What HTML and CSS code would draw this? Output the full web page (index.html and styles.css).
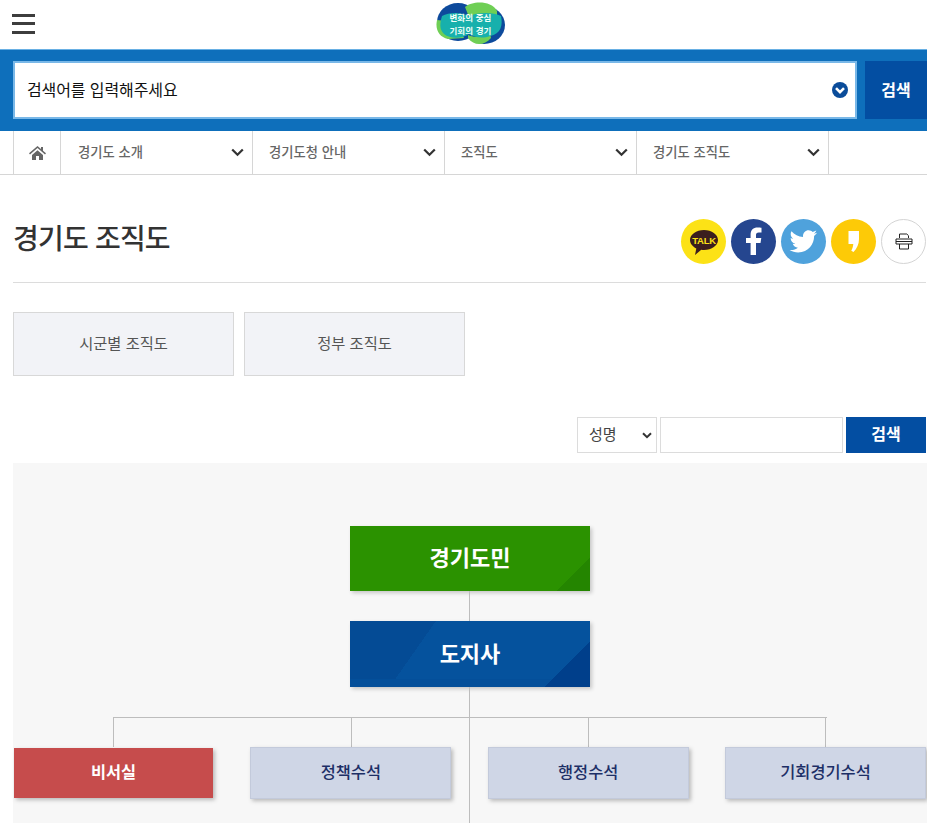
FILE: index.html
```html
<!DOCTYPE html>
<html lang="ko">
<head>
<meta charset="utf-8">
<title>경기도 조직도</title>
<link rel="stylesheet" href="styles.css">
</head>
<body>
<header class="top">
  <button class="burger" aria-label="메뉴"><span></span><span></span><span></span></button>
  <div class="logo">
    <svg width="70" height="44" viewBox="0 0 70 44">
      <ellipse cx="22" cy="20" rx="21" ry="19" fill="#0d4a9c"/>
      <ellipse cx="48" cy="23" rx="21" ry="19" fill="#0d4a9c"/>
      <path d="M29 5C36-1 55-2 61 9L61 14 33 15Z" fill="#6fcf55"/>
      <path d="M1 18C-1 28 3 35 12 37L28 36 20 20Z" fill="#6fcf55"/>
      <path d="M32 33C38 36 48 35 54 31L55 36C48 44 38 44 32 36Z" fill="#6fcf55"/>
      <path d="M6 14C13 10 25 10 33 14 42 10 58 10 65 14 67 23 65 32 54 34 46 37 38 35 33 32 26 37 14 37 8 32 3 27 4 21 6 14Z" fill="#17b0ac"/>
    </svg>
    <div class="logo-text">변화의 중심<br>기회의 경기</div>
  </div>
</header>

<section class="search-band">
  <div class="search-input">
    <span>검색어를 입력해주세요</span>
    <svg class="search-chev" width="16" height="16" viewBox="0 0 16 16"><circle cx="8" cy="8" r="8" fill="#0a4c9a"/><path d="M4 6.200 8 10.200 12 6.200" fill="none" stroke="#fff" stroke-width="2.600"/></svg>
  </div>
  <button class="search-btn">검색</button>
</section>

<nav class="crumbs">
  <a class="home" aria-label="홈">
    <svg width="17" height="14" viewBox="0 0 17 14"><path d="M8.500 0 0 7.200l1 1.200 7.500-6.300L16 8.400l1-1.200-3-2.500V1h-2v2L8.500 0Z" fill="#666"/><path d="M3 9 8.500 4.300 14 9v5H10V10H7v4H3Z" fill="#666"/></svg>
  </a>
  <a class="crumb"><span>경기도 소개</span><svg class="chev" width="13" height="9" viewBox="0 0 13 9"><path d="M1.200 1.400 6.500 6.800l5.300-5.400" fill="none" stroke="#333" stroke-width="2.200"/></svg></a>
  <a class="crumb"><span>경기도청 안내</span><svg class="chev" width="13" height="9" viewBox="0 0 13 9"><path d="M1.200 1.400 6.500 6.800l5.300-5.400" fill="none" stroke="#333" stroke-width="2.200"/></svg></a>
  <a class="crumb"><span>조직도</span><svg class="chev" width="13" height="9" viewBox="0 0 13 9"><path d="M1.200 1.400 6.500 6.800l5.300-5.400" fill="none" stroke="#333" stroke-width="2.200"/></svg></a>
  <a class="crumb"><span>경기도 조직도</span><svg class="chev" width="13" height="9" viewBox="0 0 13 9"><path d="M1.200 1.400 6.500 6.800l5.300-5.400" fill="none" stroke="#333" stroke-width="2.200"/></svg></a>
</nav>

<main class="content">
  <div class="title-row">
    <h1>경기도 조직도</h1>
    <div class="shares">
      <span class="share kakao"><svg width="45" height="45" viewBox="0 0 45 45"><path d="M23 11C15.300 11 9 15.500 9 21c0 3.500 2.500 6.600 6.300 8.400L14 36l6.300-5.200c.9.100 1.800.2 2.700.2 7.700 0 14-4.500 14-10S30.700 11 23 11Z" fill="#3b1e1e"/><text x="23" y="24.500" text-anchor="middle" class="talk">TALK</text></svg></span>
      <span class="share fb"><svg width="45" height="45" viewBox="0 0 45 45"><path d="M25 36V24h4.500l.8-5H25v-3c0-1.700.7-2.600 2.700-2.600h2.800V8.700C29.800 8.600 28.300 8.500 26.600 8.500c-4.300 0-7 2.600-7 7.100V19H15v5h4.600v12Z" fill="#fff"/></svg></span>
      <span class="share tw"><svg width="45" height="45" viewBox="0 0 45 45"><path d="M36 13.800c-1 .5-2.100.8-3.200.9 1.200-.7 2-1.800 2.500-3.100-1.100.7-2.300 1.100-3.600 1.400-1-1.100-2.500-1.800-4.100-1.800-3.100 0-5.600 2.500-5.600 5.600 0 .4 0 .9.100 1.300-4.700-.2-8.800-2.400-11.600-5.800-.5.800-.8 1.800-.8 2.800 0 2 1 3.700 2.500 4.700-.9 0-1.800-.3-2.500-.7v.1c0 2.700 1.900 5 4.500 5.500-.5.100-1 .2-1.500.2-.4 0-.7 0-1-.1.700 2.200 2.800 3.800 5.200 3.900-1.900 1.500-4.300 2.400-7 2.400-.5 0-.9 0-1.300-.1 2.500 1.600 5.400 2.500 8.600 2.500 10.300 0 15.900-8.500 15.900-15.900v-.7c1.100-.8 2-1.800 2.800-2.900Z" fill="#fff"/></svg></span>
      <span class="share story"><svg width="45" height="45" viewBox="0 0 45 45"><path d="M17.500 12H28v8c0 5-2 9.500-5.500 13l-2.200-1.300c1.200-2.500 1.900-4.500 2-6.700h-4.800Z" fill="#fff"/></svg></span>
      <span class="share print"><svg width="18" height="17" viewBox="0 0 18 17"><path d="M4.500 5V1h7.300L13.500 2.700V5M1 6h16v5H1ZM4.500 11v5h9v-5M1 8.500h16" fill="none" stroke="#222" stroke-width="1"/></svg></span>
    </div>
  </div>

  <div class="tabs">
    <a class="tab">시군별 조직도</a>
    <a class="tab">정부 조직도</a>
  </div>

  <form class="finder">
    <div class="finder-select"><span>성명</span><svg width="10" height="7" viewBox="0 0 10 7"><path d="M1 1.200 5 5.200l4-4" fill="none" stroke="#333" stroke-width="2"/></svg></div>
    <div class="finder-input"></div>
    <button class="finder-btn" type="button">검색</button>
  </form>

  <section class="chart">
    <div class="node node-green">경기도민</div>
    <div class="link"></div>
    <div class="node node-blue">도지사</div>
    <div class="link"></div>
    <div class="branch">
      <div class="branch-item"><div class="drop"></div><div class="sub sub-red">비서실</div></div>
      <div class="branch-item"><div class="drop drop-shift"></div><div class="sub">정책수석</div></div>
      <div class="branch-item"><div class="drop"></div><div class="sub">행정수석</div></div>
      <div class="branch-item"><div class="drop drop-shift"></div><div class="sub">기회경기수석</div></div>
    </div>
  </section>
</main>
</body>
</html>
```
FILE: styles.css
```css
* { box-sizing: border-box; }
html, body { margin: 0; padding: 0; height: 823px; overflow: hidden; background: #fff; }
body { font-family: "Noto Sans CJK KR", "Noto Sans", sans-serif; color: #333; }

.top { height: 49px; display: flex; align-items: center; position: relative; }
.burger { width: 23px; height: 20px; margin: 0 0 2px 12px; padding: 0; border: 0; background: none; display: flex; flex-direction: column; justify-content: space-between; }
.burger span { display: block; height: 3px; background: #3d3d3d; }
.logo { position: absolute; left: 436px; top: 2px; width: 70px; height: 44px; }
.logo-text { position: absolute; inset: 9px 0 0 -1px; text-align: center; font-size: 8.500px; line-height: 12.500px; font-weight: 700; color: #f0fff8; letter-spacing: .1px; }

.search-band { height: 82px; background: #0e6fbb; border-top: 1px solid #69b0e4; display: flex; align-items: flex-start; padding: 11px 0 0 13px; }
.search-input { width: 844px; height: 58px; border: 2px solid #79b8e8; background: #fff; display: flex; align-items: center; justify-content: space-between; padding: 0 7px 0 12px; font-size: 16px; color: #111; letter-spacing: -.1px; }
.search-input span { padding-bottom: 3px; }
.search-btn { width: 62px; height: 58px; margin-left: 8px; border: 0; background: #034ea2; color: #fff; font: 700 16px "Noto Sans CJK KR", sans-serif; padding: 0 0 3px; }

.crumbs { height: 44px; border-bottom: 1px solid #d6d6d6; padding-left: 13px; display: flex; }
.home { width: 48px; border-left: 1px solid #d6d6d6; border-right: 1px solid #d6d6d6; display: flex; align-items: center; justify-content: center; }
.crumb { width: 192px; border-right: 1px solid #d6d6d6; display: flex; align-items: center; justify-content: space-between; padding: 0 8px 0 16px; font-size: 13.300px; font-weight: 500; color: #666; }
.crumb span { padding-bottom: 2px; }
.home + .crumb { padding-left: 17px; }

.content { padding: 0 1px 0 13px; }
.title-row { height: 108px; border-bottom: 1px solid #dcdcdc; display: flex; justify-content: space-between; align-items: flex-start; padding-top: 44px; }
h1 { margin: 0; font-size: 28px; line-height: 36px; font-weight: 500; color: #333; letter-spacing: -.8px; }
.shares { display: flex; gap: 5px; }
.share { width: 45px; height: 45px; border-radius: 50%; display: flex; align-items: center; justify-content: center; }
.kakao { background: #fce216; }
.talk { font: 700 9.500px "Liberation Sans", sans-serif; fill: #fce216; letter-spacing: -.3px; }
.fb { background: #25468f; }
.tw { background: #4fa2dc; }
.story { background: #fdca07; }
.print { background: #fff; border: 1px solid #d4d4d4; }

.tabs { display: flex; gap: 10px; margin-top: 29px; }
.tab { width: 221px; height: 64px; background: #f2f3f7; border: 1px solid #d8d8d8; display: flex; align-items: center; justify-content: center; padding-bottom: 4px; font-size: 15.300px; color: #555; }

.finder { display: flex; justify-content: flex-end; gap: 3px; margin-top: 41px; height: 36px; }
.finder-select { width: 80px; border: 1px solid #dcdcdc; display: flex; align-items: center; justify-content: space-between; padding: 0 4px 0 11px; font-size: 15px; color: #444; }
.finder-select span { padding-bottom: 4px; }
.finder-input { width: 183px; border: 1px solid #dcdcdc; background: #fff; }
.finder-btn { width: 80px; border: 0; background: #034ea2; color: #fff; font: 700 16px "Noto Sans CJK KR", sans-serif; padding: 0 0 5px; }

.chart { margin-top: 10px; margin-right: -1px; height: 360px; background: #f7f7f7; padding-top: 63px; display: flex; flex-direction: column; align-items: center; position: relative; }
.node { width: 240px; flex: none; display: flex; align-items: center; justify-content: center; padding-bottom: 5px; color: #fff; font-size: 22px; font-weight: 700; box-shadow: 2px 2px 4px rgba(0,0,0,.2); }
.node-green { height: 65px; background: linear-gradient(135deg, #2b9200 0 89%, #248500 89%); }
.node-blue { height: 66px; background: linear-gradient(135deg, transparent 85%, #003f8b 85%), linear-gradient(to bottom, transparent 88%, #044f9a 88%), linear-gradient(125deg, #044b95 30%, #05529d 30%); }
.link { width: 1px; height: 30px; flex: none; background: #bdbdbd; margin-left: -1px; }
.branch { width: 100%; display: flex; justify-content: space-between; align-items: flex-start; padding: 0 1px 0 0; position: relative; }
.branch::before { content: ""; position: absolute; left: 100px; right: 100px; top: 0; height: 1px; background: #bdbdbd; }
.branch::after { content: ""; position: absolute; left: 456px; top: 0; width: 1px; height: 106px; background: #bdbdbd; }
.branch-item { width: 201px; display: flex; flex-direction: column; align-items: center; }
.drop { width: 1px; height: 30px; background: #bdbdbd; }
.drop-shift { margin-left: 1px; }
.sub { width: 201px; height: 52px; background: #cfd6e6; color: #1d2f66; border: 1px solid #c3cadb; display: flex; align-items: center; justify-content: center; padding-bottom: 4px; font-size: 16.400px; font-weight: 500; box-shadow: 2px 2px 4px rgba(0,0,0,.25); }
.sub-red { width: 199px; height: 50px; margin-top: 1px; background: #c64c4c; border: 0; color: #fff; font-weight: 700; }
```
